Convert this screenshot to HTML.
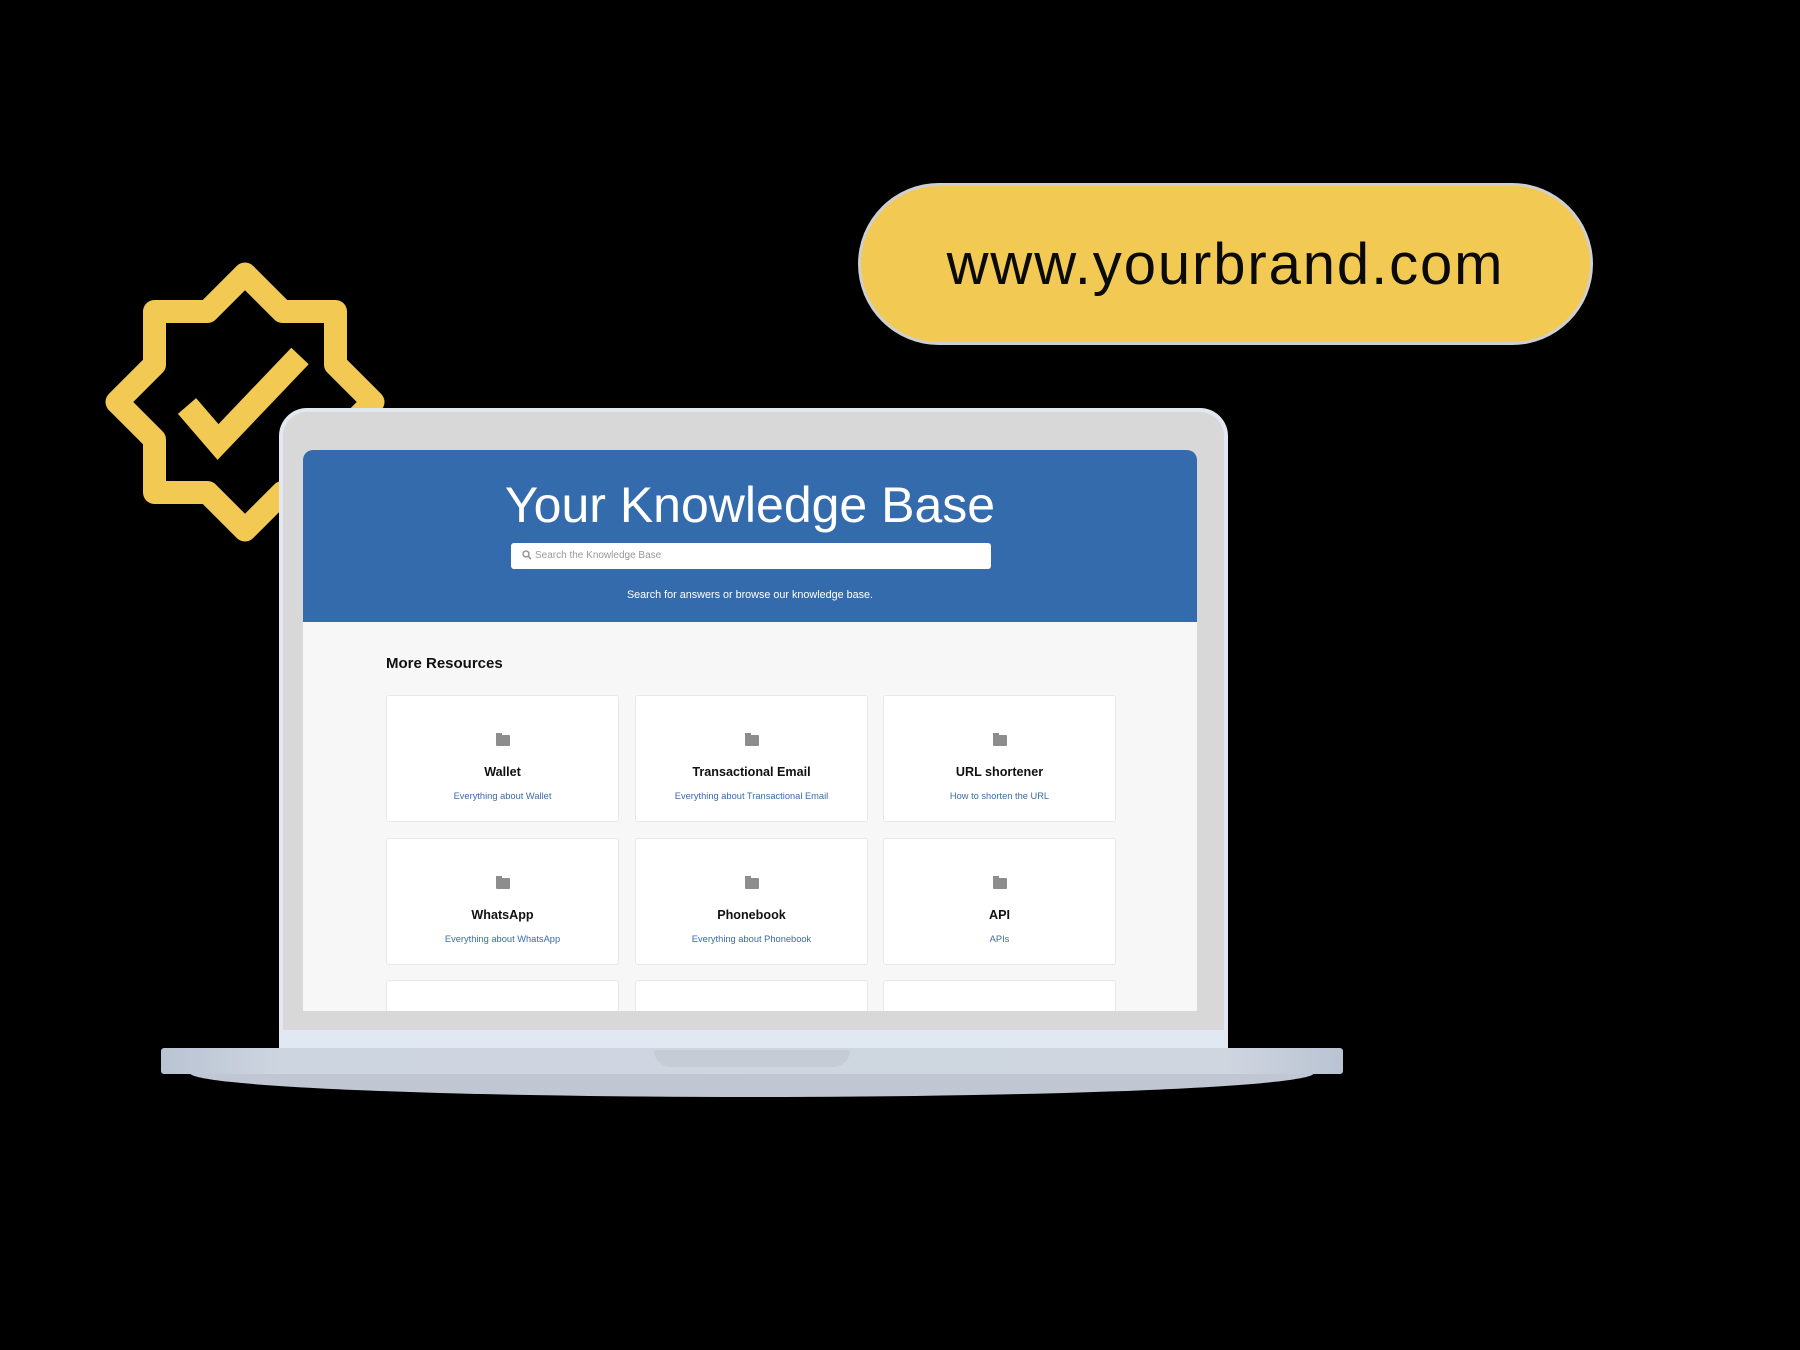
<!DOCTYPE html>
<html><head><meta charset="utf-8"><style>
*{margin:0;padding:0;box-sizing:border-box}
body{width:1800px;height:1350px;background:#000;position:relative;overflow:hidden;font-family:"Liberation Sans",Arial,sans-serif}
.abs{position:absolute}
.pill{left:861px;top:186px;width:729px;height:156px;background:#f2c952;border-radius:78px;display:flex;align-items:center;justify-content:center;font-size:58px;color:#0a0a0a;letter-spacing:1.9px;box-shadow:0 0 0 3px #cfcfcf}
.lid{left:279px;top:408px;width:949px;height:642px;background:#d8d8d8;border-radius:28px 28px 0 0;border:4px solid #e3e8f0;border-bottom:none}
.strip{left:279px;top:1030px;width:949px;height:20px;background:#e2e8f1}
.screen{left:303px;top:450px;width:894px;height:561px;background:#f7f7f7;overflow:hidden;border-radius:10px 10px 0 0}
.hdr{left:0;top:0;width:894px;height:172px;background:#346bad}
.title{left:0;width:894px;top:26px;text-align:center;color:#fff;font-size:50px}
.search{left:208px;top:93px;width:480px;height:26px;background:#fff;border-radius:3px;font-size:10px;color:#999;padding:7px 0 0 24px}
.sub{left:0;width:894px;top:139px;text-align:center;color:#fff;font-size:10.8px}
.mr{left:83px;top:205px;font-size:15px;font-weight:bold;color:#111}
.card{width:233px;height:127px;background:#fff;border:1px solid #e8e8e8;border-radius:3px;text-align:center}
.card .f{position:absolute;left:109px;top:39px;width:14px;height:11px;background:#8d8d8d;border-radius:1px}
.card .f:before{content:"";position:absolute;left:0;top:-2px;width:6px;height:3px;background:#8d8d8d}
.card .t{position:absolute;left:0;width:100%;top:69px;font-size:12.6px;font-weight:bold;color:#111}
.card .d{position:absolute;left:0;width:100%;top:95px;font-size:9.3px;color:#3b6ba8}
.base{left:161px;top:1048px;width:1182px;height:26px;background:linear-gradient(90deg,#b9c3d2,#cdd5e0 10%,#cfd6e0 90%,#b9c3d2);border-radius:3px}
.base2{left:190px;top:1073px;width:1124px;height:24px;background:#c0c7d2;border-radius:0 0 50% 50%/0 0 100% 100%}
.notch{left:654px;top:1050px;width:196px;height:17px;background:#c5ccd6;border-radius:0 0 24px 24px}
</style></head><body>
<div class="abs pill">www.yourbrand.com</div>
<svg class="abs" style="left:0;top:0" width="1800" height="1350">
<polygon points="245,274 282.5,311.5 335.5,311.5 335.5,364.5 373,402 335.5,439.5 335.5,492.5 282.5,492.5 245,530 207.5,492.5 154.5,492.5 154.5,439.5 117,402 154.5,364.5 154.5,311.5 207.5,311.5" fill="none" stroke="#f2c952" stroke-width="23" stroke-linejoin="round"/>
<polyline points="187,406 218,442 300,356" fill="none" stroke="#f2c952" stroke-width="24"/>
</svg>
<div class="abs lid"></div>
<div class="abs strip"></div>
<div class="abs screen">
 <div class="abs hdr">
  <div class="abs title">Your Knowledge Base</div>
  <div class="abs search"><svg class="abs" style="left:11px;top:7px" width="10" height="10"><circle cx="4" cy="4" r="3" fill="none" stroke="#888" stroke-width="1.3"/><line x1="6" y1="6" x2="9" y2="9" stroke="#888" stroke-width="1.3"/></svg>Search the Knowledge Base</div>
  <div class="abs sub">Search for answers or browse our knowledge base.</div>
 </div>
 <div class="abs mr">More Resources</div>
 <div class="abs card" style="left:83px;top:245px"><div class="f"></div><div class="t">Wallet</div><div class="d">Everything about Wallet</div></div>
 <div class="abs card" style="left:332px;top:245px"><div class="f"></div><div class="t">Transactional Email</div><div class="d">Everything about Transactional Email</div></div>
 <div class="abs card" style="left:580px;top:245px"><div class="f"></div><div class="t">URL shortener</div><div class="d">How to shorten the URL</div></div>
 <div class="abs card" style="left:83px;top:388px"><div class="f"></div><div class="t">WhatsApp</div><div class="d">Everything about WhatsApp</div></div>
 <div class="abs card" style="left:332px;top:388px"><div class="f"></div><div class="t">Phonebook</div><div class="d">Everything about Phonebook</div></div>
 <div class="abs card" style="left:580px;top:388px"><div class="f"></div><div class="t">API</div><div class="d">APIs</div></div>
 <div class="abs card" style="left:83px;top:530px"></div>
 <div class="abs card" style="left:332px;top:530px"></div>
 <div class="abs card" style="left:580px;top:530px"></div>
</div>
<div class="abs base2"></div>
<div class="abs base"></div>
<div class="abs notch"></div>
</body></html>
